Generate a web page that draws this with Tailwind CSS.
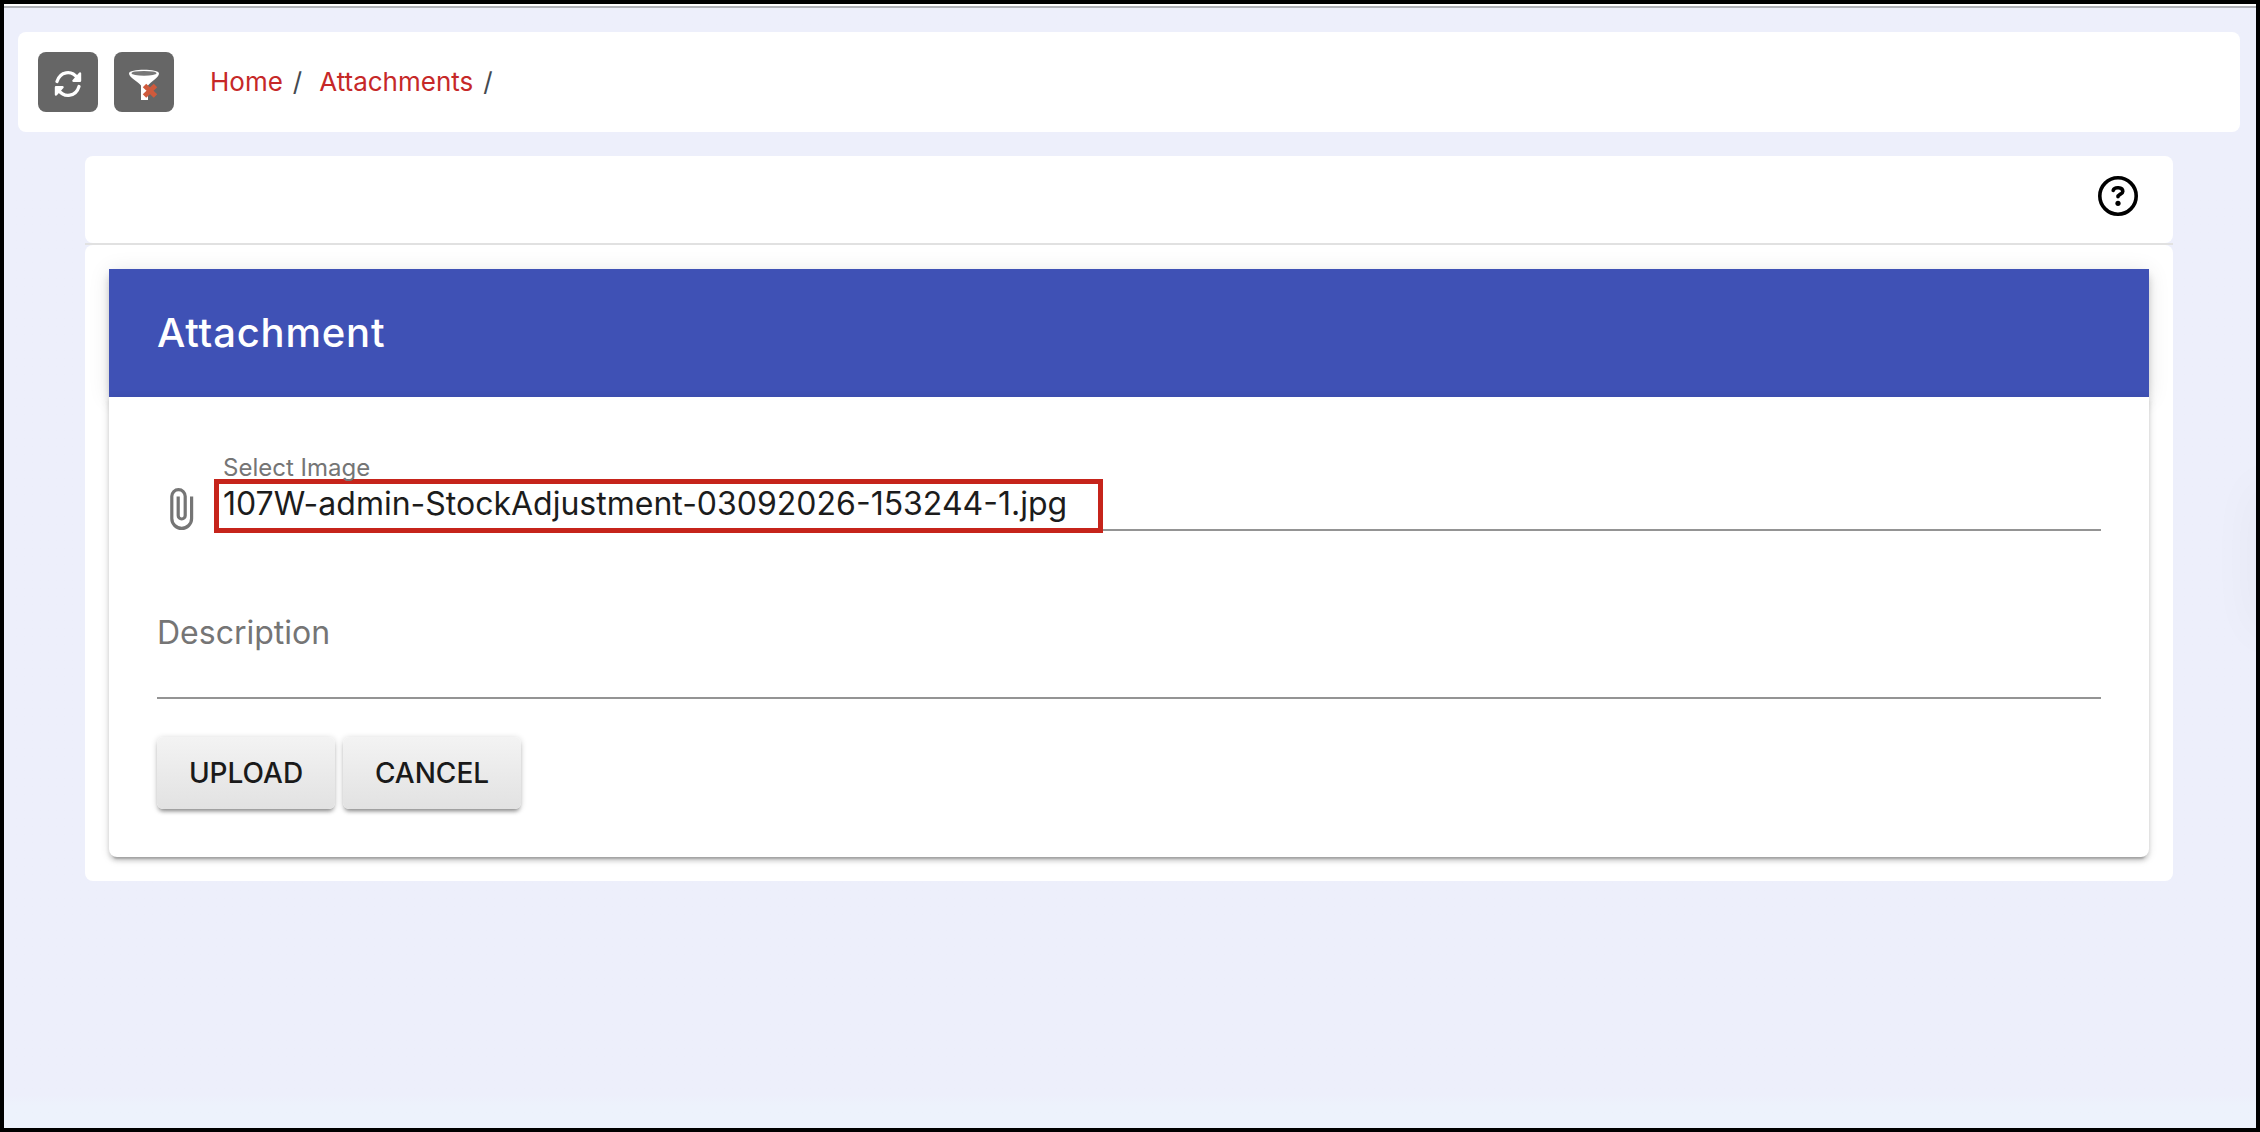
<!DOCTYPE html>
<html lang="en">
<head>
    <meta charset="UTF-8">
    <meta name="viewport" content="width=device-width, initial-scale=1.0">
    <title>Attachment</title>
    <script src="https://cdn.jsdelivr.net/npm/@tailwindcss/browser@4"></script>
</head>
<body class="font-['Inter',sans-serif]">
<div class="relative h-screen overflow-hidden border-4 border-black bg-linear-to-b from-[#edeffb] from-97% to-[#edf2fc] to-98%">
    <div class="h-0.5 bg-white"></div>
    <div class="h-0.5 bg-[#b0b2b8]"></div>

    <!-- toolbar -->
    <nav class="mt-6 ml-3.5 mr-4 h-25 flex items-center rounded-lg bg-white pl-5">
        <button class="size-15 flex items-center justify-center rounded-lg bg-[#666]">
            <svg class="mt-1 size-7" viewBox="0 0 28 28" fill="none" stroke="#fff" stroke-width="3.2" stroke-linecap="round" stroke-linejoin="round">
                <path d="M3 11.500C6 1.500 17.500 -.5 23.500 8M25 16.500C22 26.500 10.500 28.500 4.500 20"/>
                <path d="M26 3.500v7.300h-6.500zM2 24.500v-7.300h6.500z" stroke-width="2.400" fill="#fff"/>
            </svg>
        </button>
        <button class="ml-4 size-15 flex items-center justify-center rounded-lg bg-[#666]">
            <svg class="mt-1.5 h-8 w-8" viewBox="0 0 32 32">
                <path d="M1 4.500c0-5 30-5 30 0 0 4-8 8-11 12V31h-7V16.500C10 12.500 1 8.500 1 4.500z" fill="#fff"/>
                <ellipse cx="16" cy="4.300" rx="12.500" ry="2.400" fill="#777"/>
                <path d="M16.500 16.500l11 10.500M27.500 16.500l-11 10.500" stroke="#cf5a3c" stroke-width="5"/>
            </svg>
        </button>
        <div class="ml-9 flex whitespace-pre text-[26px] leading-8 text-[#c62828]">
            <a href="#">Home</a><span class="ml-2.5 text-[#444a50]">/</span>
            <a href="#" class="ml-[17px]">Attachments</a><span class="ml-2.5 text-[#444a50]">/</span>
        </div>
    </nav>

    <main class="mt-6 ml-[81px] mr-[83px]">
        <div class="border-b-2 border-[#e1e1e1]">
            <div class="h-[87px] flex items-start justify-end rounded-lg bg-white pt-5 pr-[35px]">
                <svg class="size-10" viewBox="0 0 40 40" fill="none" stroke="#000" stroke-width="3.600" stroke-linecap="round">
                    <circle cx="20" cy="20" r="18.200"/>
                    <path d="M15.200 14.300C16.500 10.800 24.800 10.800 24.800 15.500C24.800 18 20 18.300 20 20.800"/>
                    <circle cx="20" cy="27.300" r="2.600" fill="#000" stroke="none"/>
                </svg>
            </div>
        </div>
        <div class="h-[636px] rounded-lg bg-white p-6">
            <div class="h-32 flex items-center bg-[#3f51b5] pl-12 shadow-[0_4px_8px_-2px_#0003,0_8px_10px_#00000012,0_2px_20px_#0000001a]">
                <h1 class="text-[40px] font-medium tracking-[0.8px] text-white">Attachment</h1>
            </div>
            <form class="relative h-[460px] rounded-b-lg bg-white px-12 pt-14 shadow-[0_6px_2px_-4px_#0003,0_4px_4px_#00000024,0_2px_10px_#0000001f]">
                <div class="flex">
                    <svg class="mt-8 ml-2 h-12 w-8 shrink-0" viewBox="0 0 32 48" fill="none" stroke="#757575" stroke-width="3.2">
                        <path d="M26.600 11.500v22a9.900 9.900 0 0 1-19.800 0V11.300a6.700 6.700 0 0 1 13.400 0V30.500a3.500 3.500 0 0 1-7 0V11.500"/>
                    </svg>
                    <label class="ml-[17px] h-[78px] grow border-b-2 border-[#949494]">
                        <span class="ml-[9px] block h-[30px] text-2xl leading-[30px] text-[#757575]">Select Image</span>
                        <span class="-mt-1 flex h-[54px] w-[889px] items-center border-[5px] border-[#c6241b] bg-white pl-1 pb-1 text-[32px] text-[#1c1c1c]">107W-admin-StockAdjustment-03092026-153244-1.jpg</span>
                    </label>
                </div>
                <div class="mt-20 h-[86px] border-b-2 border-[#949494] text-[32px] leading-10 text-[#757575]">Description</div>
                <div class="mt-[38px] flex gap-2 text-[28px] font-medium text-[#1a1a1a]">
                    <button type="button" class="h-[72px] w-[178px] rounded-md bg-linear-to-b from-[#f3f3f3] to-[#e2e2e2] shadow-[0_4px_4px_-2px_#0006,0_1px_6px_#0000002e]">UPLOAD</button>
                    <button type="button" class="h-[72px] w-[178px] rounded-md bg-linear-to-b from-[#f3f3f3] to-[#e2e2e2] shadow-[0_4px_4px_-2px_#0006,0_1px_6px_#0000002e]">CANCEL</button>
                </div>
            </form>
        </div>
    </main>

    <!-- faint shadow of the closed side panel -->
    <div class="absolute -right-9 top-[480px] h-[150px] w-9 rounded-full shadow-[0_0_50px_#0000000c]"></div>
</div>
</body>
</html>
